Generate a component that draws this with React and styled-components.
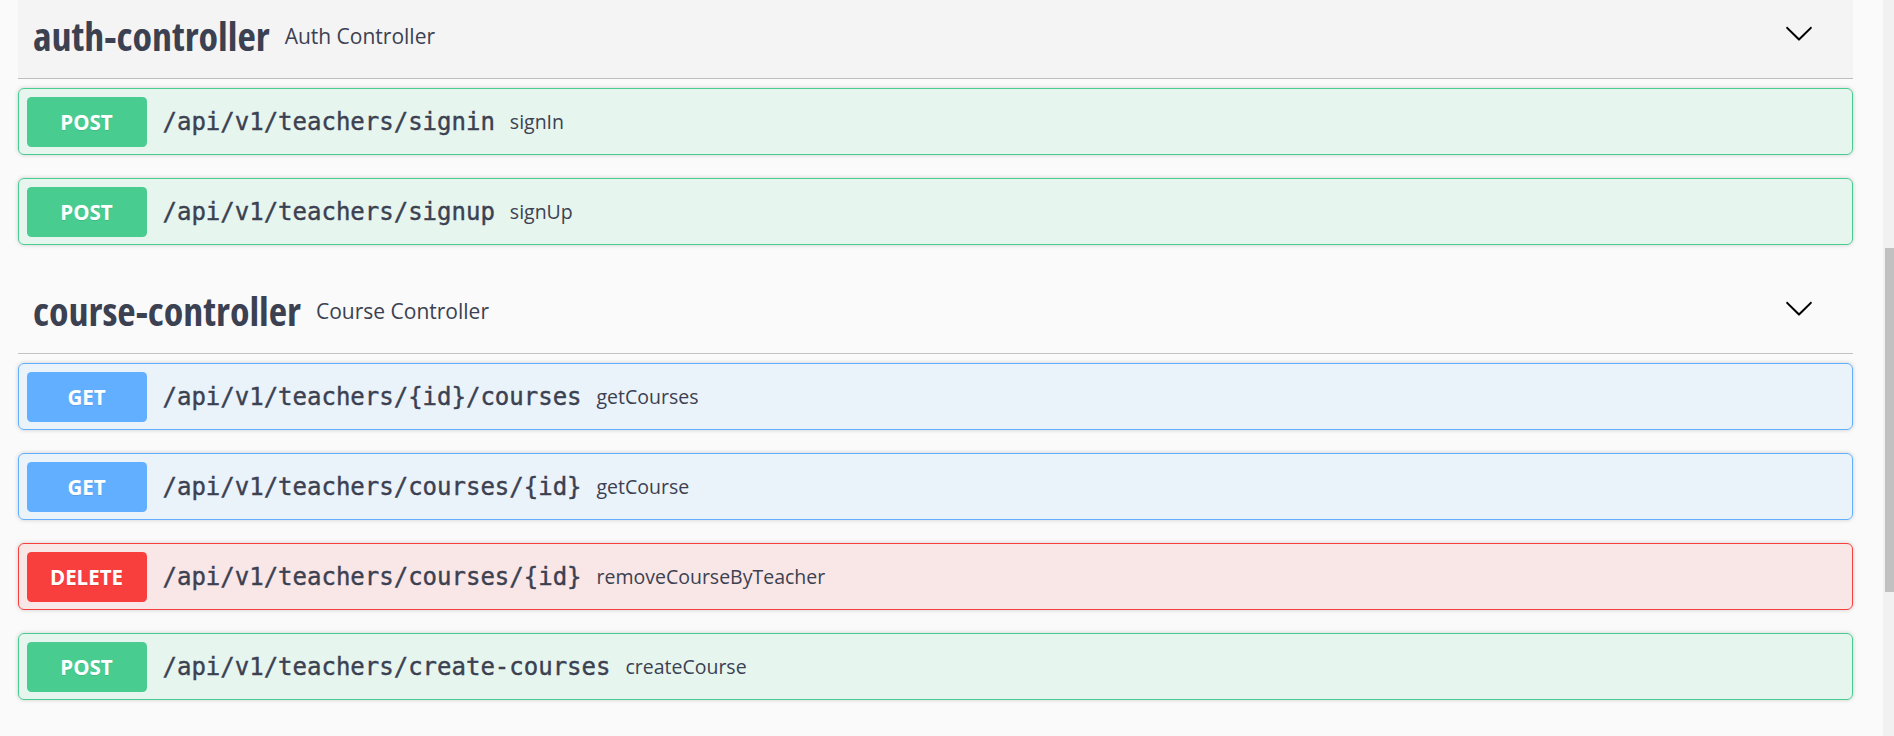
import React from "react"
import styled, { createGlobalStyle } from "styled-components"

const GlobalStyle = createGlobalStyle`
  html, body {
    margin: 0;
    padding: 0;
    background: #fafafa;
    overflow: hidden;
  }
`

const METHOD_COLORS = {
  POST: { main: "#49cc90", tint: "rgba(73, 204, 144, 0.1)" },
  GET: { main: "#61affe", tint: "rgba(97, 175, 254, 0.1)" },
  DELETE: { main: "#f93e3e", tint: "rgba(249, 62, 62, 0.1)" },
}

const sections = [
  {
    name: "auth-controller",
    description: "Auth Controller",
    hovered: true,
    operations: [
      { method: "POST", path: "/api/v1/teachers/signin", summary: "signIn" },
      { method: "POST", path: "/api/v1/teachers/signup", summary: "signUp" },
    ],
  },
  {
    name: "course-controller",
    description: "Course Controller",
    operations: [
      { method: "GET", path: "/api/v1/teachers/{id}/courses", summary: "getCourses" },
      { method: "GET", path: "/api/v1/teachers/courses/{id}", summary: "getCourse" },
      { method: "DELETE", path: "/api/v1/teachers/courses/{id}", summary: "removeCourseByTeacher" },
      { method: "POST", path: "/api/v1/teachers/create-courses", summary: "createCourse" },
    ],
  },
]

// page is scrolled a few pixels down, the first header is cut at the top
const Wrapper = styled.div`
  margin-top: -7px;
  padding: 0 41px 0 18px;
`

const Section = styled.section`
  display: flex;
  flex-direction: column;
`

const TagHeader = styled.div`
  display: flex;
  align-items: center;
  height: 86px;
  box-sizing: border-box;
  padding: 0 39px 0 15px;
  margin-bottom: 9px;
  border-bottom: 1px solid rgba(59, 65, 81, 0.3);
  background: ${p => (p.$hovered ? "#f4f4f4" : "transparent")};
  color: #3b4151;
`

const TagName = styled.h3`
  margin: 0;
  font-family: "Open Sans", sans-serif;
  font-stretch: condensed;
  font-size: 40px;
  font-weight: 700;
  line-height: 1;
`

const TagDescription = styled.small`
  flex: 1;
  padding: 0 15px;
  font-family: "Open Sans", sans-serif;
  font-size: 21px;
  font-weight: 400;
  color: #3b4151;
`

const Chevron = styled.svg`
  width: 30px;
  height: 30px;
  margin-bottom: 5px;
  fill: #000;
`

const Operation = styled.div`
  display: flex;
  align-items: center;
  margin-bottom: 23px;
  padding: 7.5px;
  border: 1px solid ${p => p.$color};
  border-radius: 6px;
  background: ${p => p.$tint};
  box-shadow: 0 0 4px rgba(0, 0, 0, 0.19);
`

const Method = styled.span`
  width: 120px;
  height: 50px;
  display: flex;
  align-items: center;
  justify-content: center;
  border-radius: 4.5px;
  background: ${p => p.$color};
  color: #fff;
  font-family: "Open Sans", sans-serif;
  font-size: 20.5px;
  font-weight: 700;
  text-shadow: 0 1px 0 rgba(0, 0, 0, 0.1);
`

const Path = styled.span`
  padding: 0 15px 0 16px;
  font-family: "DejaVu Sans Mono", "Liberation Mono", monospace;
  font-size: 24px;
  font-weight: 400;
  -webkit-text-stroke: 0.4px #3b4151;
  color: #3b4151;
`

const Summary = styled.span`
  font-family: "Open Sans", sans-serif;
  font-size: 19.5px;
  color: #3b4151;
`

const ScrollTrack = styled.div`
  position: fixed;
  top: 0;
  right: 0;
  bottom: 0;
  width: 11px;
  background: #f1f1f1;
`

const ScrollThumb = styled.div`
  position: absolute;
  top: 248px;
  left: 2px;
  right: 0;
  height: 344px;
  background: #c1c1c1;
`

const ArrowIcon = () => (
  <Chevron viewBox="0 0 20 20" aria-hidden="true">
    <path d="M17.418 6.109c.272-.268.709-.268.979 0s.271.701 0 .969l-7.908 7.83c-.27.268-.707.268-.979 0l-7.908-7.83c-.27-.268-.27-.701 0-.969.271-.268.709-.268.979 0L10 13.25l7.418-7.141z" />
  </Chevron>
)

const OperationRow = ({ method, path, summary }) => {
  const { main, tint } = METHOD_COLORS[method]
  return (
    <Operation $color={main} $tint={tint}>
      <Method $color={main}>{method}</Method>
      <Path>{path}</Path>
      <Summary>{summary}</Summary>
    </Operation>
  )
}

const App = () => (
  <>
    <GlobalStyle />
    <Wrapper>
      {sections.map(section => (
        <Section key={section.name}>
          <TagHeader $hovered={section.hovered}>
            <TagName>{section.name}</TagName>
            <TagDescription>{section.description}</TagDescription>
            <ArrowIcon />
          </TagHeader>
          {section.operations.map(op => (
            <OperationRow key={op.method + op.path} {...op} />
          ))}
        </Section>
      ))}
    </Wrapper>
    <ScrollTrack>
      <ScrollThumb />
    </ScrollTrack>
  </>
)

export default App
